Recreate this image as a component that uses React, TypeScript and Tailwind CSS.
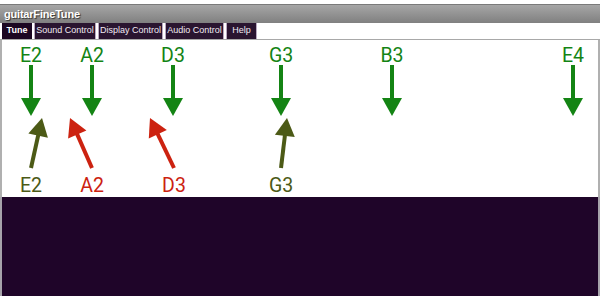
const tabs = [
  { label: 'Tune', w: 'w-[30px]' },
  { label: 'Sound Control', w: 'w-[62px]' },
  { label: 'Display Control', w: 'w-[65px]' },
  { label: 'Audio Control', w: 'w-[59px]' },
  { label: 'Help', w: 'w-[31px]' },
];

const GREEN = '#148414';
const RED = '#cc2210';
const OLIVE = '#4c5a16';

// top row: target notes
const targets = [
  { note: 'E2', x: 29 },
  { note: 'A2', x: 90 },
  { note: 'D3', x: 171 },
  { note: 'G3', x: 279 },
  { note: 'B3', x: 390 },
  { note: 'E4', x: 571 },
];

// bottom row: detected notes, arrow tip shows the offset
const detected = [
  { note: 'E2', x: 29, tip: 40, color: OLIVE },
  { note: 'A2', x: 90, tip: 68, color: RED },
  { note: 'D3', x: 172, tip: 148, color: RED },
  { note: 'G3', x: 279, tip: 285, color: OLIVE },
];

function arrow(bx: number, by: number, tx: number, ty: number) {
  const dx = tx - bx;
  const dy = ty - by;
  const len = Math.hypot(dx, dy);
  const ux = dx / len;
  const uy = dy / len;
  const head = 18;
  const half = 10;
  const hx = tx - ux * head;
  const hy = ty - uy * head;
  const px = -uy * half;
  const py = ux * half;
  return {
    shaft: { x1: bx, y1: by, x2: hx + ux * 2, y2: hy + uy * 2 },
    head: `${tx},${ty} ${hx + px},${hy + py} ${hx - px},${hy - py}`,
  };
}

function TunerDisplay() {
  return (
    <svg width="596" height="156" viewBox="0 40 596 156" className="block">
      {targets.map(t => {
        const a = arrow(t.x, 65, t.x, 116);
        return (
          <g key={t.note}>
            <text
              x={t.x}
              y={62}
              textAnchor="middle"
              fontSize="19.5"
              fontFamily="Roboto, sans-serif"
              fill={GREEN}
            >
              {t.note}
            </text>
            <line {...a.shaft} stroke={GREEN} strokeWidth="4" />
            <polygon points={a.head} fill={GREEN} />
          </g>
        );
      })}
      {detected.map(d => {
        const a = arrow(d.x, 168, d.tip, 118);
        return (
          <g key={'d' + d.note}>
            <line {...a.shaft} stroke={d.color} strokeWidth="4" />
            <polygon points={a.head} fill={d.color} />
            <text
              x={d.x}
              y={192}
              textAnchor="middle"
              fontSize="19.5"
              fontFamily="Roboto, sans-serif"
              fill={d.color}
            >
              {d.note}
            </text>
          </g>
        );
      })}
    </svg>
  );
}

export default function App() {
  return (
    <div className="h-[300px] w-[600px] bg-white pt-[4px] font-['Liberation_Sans',Arial,sans-serif]">
      {/* Title bar */}
      <div className="flex h-[19px] items-center border-t border-[#7a7a7a] bg-gradient-to-b from-[#a6a6a6] to-[#808080] pl-[4px]">
        <span className="text-[11px] font-bold tracking-[-0.2px] text-white [text-shadow:1px_1px_1px_#333]">
          guitarFineTune
        </span>
      </div>

      {/* Tabs */}
      <div className="flex h-[17px] items-stretch gap-[2px] border-b border-[#a8a8a8] pl-[2px]">
        {tabs.map((t, i) => (
          <div
            key={t.label}
            className={
              i === 0
                ? `flex ${t.w} items-center justify-center bg-[#1c0722] text-[9px] font-bold text-white`
                : `flex ${t.w} items-center justify-center border-x border-[#b9a9bf] bg-[#2a1530] text-[9px] text-[#f0eaf2]`
            }
          >
            {t.label}
          </div>
        ))}
      </div>

      {/* Tuner area */}
      <div className="h-[157px] border-l-2 border-r-2 border-[#b0b0b0] bg-white">
        <TunerDisplay />
      </div>

      {/* Dark panel */}
      <div className="h-[99px] border-x-2 border-[#a6a3aa] bg-[#1f0529]" />
    </div>
  );
}
